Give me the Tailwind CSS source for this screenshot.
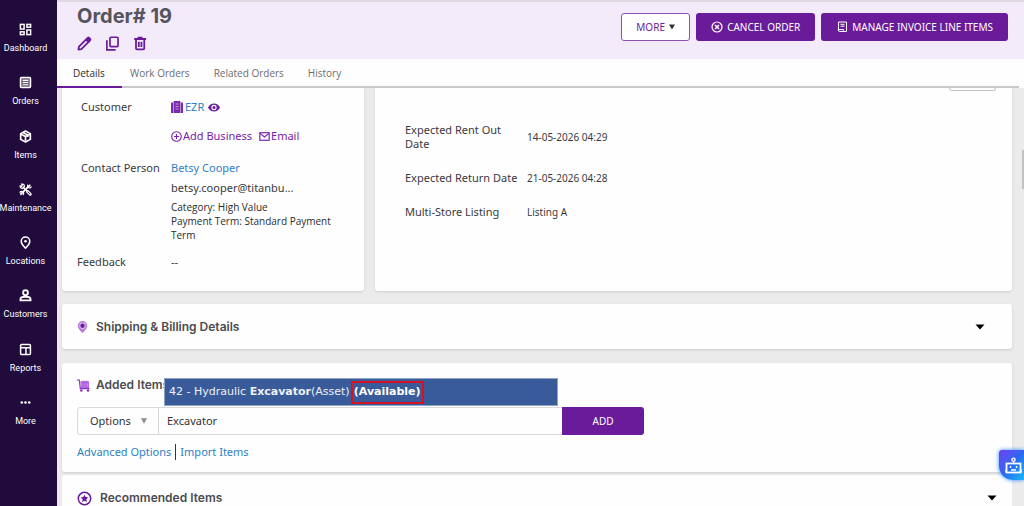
<!DOCTYPE html>
<html lang="en">
<head>
<meta charset="utf-8">
<meta name="viewport" content="width=device-width, initial-scale=1">
<title>Order# 19</title>
<script src="https://cdn.jsdelivr.net/npm/@tailwindcss/browser@4"></script>
</head>
<body class="flex h-screen overflow-hidden bg-[#ebebeb] font-['Noto_Sans','Open_Sans',sans-serif] text-[11px] leading-[14px] text-[#3a3a3d]">

<nav aria-label="Main" class="flex w-[57px] shrink-0 flex-col bg-[#210b3c] pt-[13px] pb-[67px] font-['Roboto',sans-serif] text-[9px] leading-[12px] text-white">
  <a href="#" class="flex flex-1 flex-col items-center gap-[6px] pt-[10px] pr-[6px]">
    <svg class="size-[13px] shrink-0" viewBox="0 0 14 14" fill="none" stroke="currentColor" stroke-width="1.6"><rect x="1.5" y="1.5" width="4" height="5"/><rect x="8.5" y="1.5" width="4" height="3"/><rect x="1.5" y="9.5" width="4" height="3"/><rect x="8.5" y="7.5" width="4" height="5"/></svg>Dashboard</a>
  <a href="#" class="flex flex-1 flex-col items-center gap-[6px] pt-[10px] pr-[6px]">
    <svg class="size-[13px] shrink-0" viewBox="0 0 14 14"><rect x="1.6" y="1.6" width="10.8" height="10.8" rx="1" fill="#6f6380" stroke="currentColor" stroke-width="1.6"/><path d="M4 4.7h6M4 7h6M4 9.3h6" stroke="currentColor" stroke-width="1.1"/></svg>Orders</a>
  <a href="#" class="flex flex-1 flex-col items-center gap-[6px] pt-[10px] pr-[6px]">
    <svg class="size-[13px] shrink-0" viewBox="0 0 14 14" fill="none" stroke="currentColor" stroke-width="1.8" stroke-linejoin="round"><path d="M7 1.2l5.2 2.7v6.2L7 12.8 1.8 10.1V3.9z"/><path d="M1.8 4.2L7 7l5.2-2.8M7 7v5.5M4.4 2.8l5 2.7v2"/></svg>Items</a>
  <a href="#" class="flex flex-1 flex-col items-center gap-[6px] pt-[10px] pr-[6px]">
    <svg class="size-[13px] shrink-0" viewBox="0 0 14 14" fill="none" stroke="currentColor" stroke-linecap="round"><path d="M2 12L11.5 2.5" stroke-width="2"/><path d="M4.5 4.5l6 6" stroke-width="1.5"/><path d="M9.3 9.3l2.8 2.8" stroke-width="3.2"/><path d="M9.6 9.6l2.3 2.3" stroke="#210b3c" stroke-width="1"/><path d="M2.8 1.2A2.3 2.3 0 1 1 1.2 3.1l1.5.6.8-.8zM9.3 2.3a2.4 2.4 0 0 0 2.7 3l1-1M1 10a2 2 0 0 1 3.5 2.5" stroke-width="1.3"/></svg>Maintenance</a>
  <a href="#" class="flex flex-1 flex-col items-center gap-[6px] pt-[10px] pr-[6px]">
    <svg class="size-[13px] shrink-0" viewBox="0 0 14 14" fill="none" stroke="currentColor" stroke-width="1.7"><path d="M7 13C4 10.2 2.4 8 2.4 5.7a4.6 4.6 0 0 1 9.2 0C11.6 8 10 10.2 7 13z"/><circle cx="7" cy="5.7" r="1.4" fill="currentColor" stroke="none"/></svg>Locations</a>
  <a href="#" class="flex flex-1 flex-col items-center gap-[6px] pt-[10px] pr-[6px]">
    <svg class="size-[13px] shrink-0" viewBox="0 0 14 14" fill="none" stroke="currentColor" stroke-width="2"><circle cx="7" cy="4" r="2.6"/><path d="M1.6 12.3v-1.5C1.6 9.3 4 8.3 7 8.3s5.4 1 5.4 2.5v1.5z"/></svg>Customers</a>
  <a href="#" class="flex flex-1 flex-col items-center gap-[6px] pt-[10px] pr-[6px]">
    <svg class="size-[13px] shrink-0" viewBox="0 0 14 14" fill="none" stroke="currentColor" stroke-width="1.6"><rect x="1.7" y="1.7" width="10.6" height="10.6" rx="1"/><path d="M2 5.2h10M7.5 5.2v7"/></svg>Reports</a>
  <a href="#" class="flex flex-1 flex-col items-center gap-[6px] pt-[10px] pr-[6px]">
    <svg class="size-[13px] shrink-0" viewBox="0 0 14 14" fill="currentColor"><circle cx="3" cy="7" r="1.4"/><circle cx="7" cy="7" r="1.4"/><circle cx="11" cy="7" r="1.4"/></svg>More</a>
</nav>

<div class="flex min-w-0 flex-1 flex-col">
  <header class="flex h-[59px] shrink-0 items-start justify-between border-t-2 border-[#dfd9e3] bg-[#f4ebfa] pr-4 pl-5">
    <div class="flex flex-col gap-2 pt-[2px]">
      <h1 class="font-['Inter',sans-serif] text-[20px] leading-6 font-bold text-[#55545c]">Order# 19</h1>
      <div class="flex gap-[13px] text-[#6a1b9a]">
        <button type="button" aria-label="Edit"><svg class="size-[15px]" viewBox="0 0 16 16" fill="none" stroke="currentColor" stroke-width="1.9" stroke-linejoin="round"><path d="M1.5 14.5l.6-3.2 7.7-7.7 2.6 2.6-7.7 7.7z"/><path d="M9.8 3.6l1.6-1.6q.8-.7 1.6 0l1 1q.7.8 0 1.6l-1.6 1.6z" fill="currentColor"/></svg></button>
        <button type="button" aria-label="Duplicate"><svg class="size-[15px]" viewBox="0 0 16 16" fill="none" stroke="currentColor" stroke-width="1.8"><rect x="5.3" y="1.3" width="8.6" height="10" rx="1"/><path d="M2 4.5v10.2h9.3"/></svg></button>
        <button type="button" aria-label="Delete"><svg class="size-[15px]" viewBox="0 0 16 16" fill="none" stroke="currentColor" stroke-width="1.9"><path d="M1.3 3.2h12.6M5 1.8h5.2M3.2 3.5v9.7q0 1 1 1h6.8q1 0 1-1V3.5M6.2 6v5.7M9 6v5.7"/></svg></button>
      </div>
    </div>
    <div class="flex gap-[6px] pt-[11px] text-[10px]">
      <button type="button" class="flex h-7 w-[69px] items-center justify-center gap-1 rounded-[3px] border border-[#8e4fb5] bg-white text-[#6a1b9a]">MORE <svg class="size-[6px]" viewBox="0 0 6 6" fill="#333"><path d="M0 .5h6L3 5.5z"/></svg></button>
      <button type="button" class="flex h-7 items-center justify-center gap-1 rounded-[3px] bg-[#6a1b9a] px-[15px] text-white"><svg class="size-3" viewBox="0 0 12 12" fill="none" stroke="currentColor" stroke-width="1.2"><circle cx="6" cy="6" r="5"/><path d="M4 4l4 4M8 4l-4 4" stroke-width="1.5"/></svg>CANCEL ORDER</button>
      <button type="button" class="flex h-7 items-center justify-center gap-1 rounded-[3px] bg-[#6a1b9a] px-[15px] text-white"><svg class="size-3" viewBox="0 0 12 12" fill="none" stroke="currentColor"><path d="M2.5 8V1h8v9.5H4Q2 10.5 2 8.5h5.5v1q0 1 1 1M4.5 3.3h4M4.5 5.2h4"/></svg>MANAGE INVOICE LINE ITEMS</button>
    </div>
  </header>

  <nav aria-label="Order sections" class="mr-[5px] flex h-[29px] shrink-0 border-b-2 border-[#c8c8ca] bg-[#fefefe] font-['Open_Sans',sans-serif] text-[10px] text-[#6d6d70] shadow-[5px_0_0_#fefefe]">
    <a href="#" class="-mb-[2px] flex w-[65px] items-center border-b-2 border-[#6a1b9a] pl-4 text-[#2c2c2e]">Details</a>
    <a href="#" class="flex items-center pl-2">Work Orders</a>
    <a href="#" class="flex items-center pl-6">Related Orders</a>
    <a href="#" class="flex items-center pl-6">History</a>
  </nav>

  <main class="relative flex min-h-0 flex-1 flex-col overflow-hidden pr-3 pl-[5px]">
    <div class="flex shrink-0 gap-[11px]">
      <section aria-label="Customer" class="w-[302px] shrink-0 rounded-b-[3px] bg-[#fefefe] pb-[22px] shadow-sm">
        <dl class="grid grid-cols-[90px_1fr] pt-3 pl-[19px] text-[11px]">
          <dt>Customer</dt>
          <dd class="flex flex-col gap-[15px]">
            <div class="flex items-center gap-[2px]"><svg class="size-3" viewBox="0 0 12 12"><path d="M2.6 0h6.8v12H2.6zM0 1.5h2V12H0zM10 1.5h2V12h-2z" fill="#7a2cac"/><path d="M2 2h.8v10H2zM9.200 2h.8v10h-.8z" fill="#b98ad6"/><path d="M4.500 3h3M4.500 5.500h3M4.500 8h3" stroke="#d7b6ea" stroke-width=".8"/></svg><a href="#" class="text-[#2f7fc4]">EZR</a><svg class="ml-[2px] h-[9px] w-3" viewBox="0 0 12 9"><path d="M0 4.500C2.500-.8 9.500-.8 12 4.500 9.500 9.800 2.500 9.800 0 4.500z" fill="#6a1b9a"/><circle cx="6" cy="4.500" r="2.100" fill="#6a1b9a" stroke="#fff" stroke-width="1.100"/></svg></div>
            <div class="flex gap-[7px] text-[#7a22a8]">
              <a href="#" class="flex items-center gap-px"><svg class="size-[11px]" viewBox="0 0 12 12" fill="none" stroke="currentColor" stroke-width="1.2"><circle cx="6" cy="6" r="5.2"/><path d="M6 3.2v5.6M3.2 6h5.6"/></svg>Add Business</a>
              <a href="#" class="flex items-center gap-px"><svg class="h-[9px] w-[11px]" viewBox="0 0 12 10" fill="none" stroke="currentColor" stroke-width="1.3"><rect x=".8" y=".8" width="10.4" height="8.4"/><path d="M1 1.5l5 4 5-4"/></svg>Email</a>
            </div>
          </dd>
          <dt class="pt-[18px]">Contact Person</dt>
          <dd class="flex flex-col pt-[18px]"><a href="#" class="text-[#2f7fc4]">Betsy Cooper</a><span class="mt-[6px]">betsy.cooper@titanbu...</span><span class="mt-[5px] w-[170px] font-['Open_Sans',sans-serif] text-[10px] text-[#2c2c2e]">Category: High Value<br>Payment Term: Standard Payment Term</span></dd>
          <dt class="-ml-1 pt-[13px]">Feedback</dt>
          <dd class="pt-[13px]">--</dd>
        </dl>
      </section>
      <section aria-label="Schedule" class="relative min-w-0 flex-1 rounded-b-[3px] bg-[#fefefe] shadow-sm">
        <div class="absolute top-0 right-4 h-[3px] w-[47px] rounded-b-[3px] border border-t-0 border-[#c4c4c6]"></div>
        <dl class="grid grid-cols-[122px_1fr] items-center gap-y-5 pt-[35px] pl-[30px] text-[10px]">
          <dt class="w-[105px] text-[11px]">Expected Rent Out Date</dt><dd>14-05-2026 04:29</dd>
          <dt class="text-[11px] whitespace-nowrap">Expected Return Date</dt><dd>21-05-2026 04:28</dd>
          <dt class="text-[11px]">Multi-Store Listing</dt><dd>Listing A</dd>
        </dl>
      </section>
    </div>

    <section class="mt-[13px] flex h-[45px] shrink-0 items-center rounded-[3px] bg-[#fefefe] pr-[27px] pl-[15px] shadow-sm">
      <svg class="h-3 w-[11px]" viewBox="0 0 11 12"><path d="M5.5 12C2.5 9 .8 7 .8 4.700a4.700 4.700 0 0 1 9.400 0C10.200 7 8.500 9 5.500 12z" fill="#b67be0"/><circle cx="5.500" cy="4.700" r="3.100" fill="#e3c8f5"/><circle cx="5.500" cy="4.700" r="2.200" fill="#6a1b9a"/></svg>
      <h2 class="ml-2 flex-1 font-['Inter',sans-serif] text-[12px] font-semibold text-[#4b4b4f]">Shipping &amp; Billing Details</h2>
      <button type="button" aria-label="Expand shipping and billing details"><svg class="h-[6px] w-[10px]" viewBox="0 0 10 6"><path d="M.5.5h9L5 5.5z"/></svg></button>
    </section>

    <section class="relative mt-[14px] h-[109px] shrink-0 rounded-[3px] bg-[#fefefe] pt-[15px] pl-[15px] shadow-sm">
      <div class="flex items-center gap-[6px]">
        <svg class="size-[13px]" viewBox="0 0 13 13"><path d="M0 1h2.300l1 8.600H12.500" fill="none" stroke="#8a35bd" stroke-width="1.200"/><path d="M3.500 2.200l1-.5.9.5.9-.6.9.6.9-.6.9.6.9-.6 1.100.6h1V9H3.900z" fill="#b264e2"/><path d="M5 4.500v3M8 4.500v3M10.500 4.500v3" stroke="#cd9bef" stroke-width=".7"/><circle cx="4.300" cy="11.500" r="1.300" fill="#8a35bd"/><circle cx="11" cy="11.500" r="1.300" fill="#8a35bd"/></svg>
        <h2 class="font-['Inter',sans-serif] text-[12px] font-semibold text-[#4b4b4f]">Added Items</h2>
      </div>
      <form class="mt-[15px] flex h-7 text-[11px]">
        <div class="relative w-[82px]">
          <select aria-label="Options" class="h-full w-full appearance-none rounded-l-[3px] border border-[#d9d9db] pl-3 text-[#333]"><option>Options</option></select>
          <svg class="pointer-events-none absolute top-[11px] right-3 size-[6px]" viewBox="0 0 6 6" fill="#8c8c8e"><path d="M0 .3h6L3 5.7z"/></svg>
        </div>
        <input aria-label="Search items" type="text" value="Excavator" class="w-[403px] border-y border-[#d9d9db] px-2 text-[#333]">
        <button type="button" class="w-[82px] rounded-r-[3px] bg-[#6a1b9a] text-[10px] text-white">ADD</button>
      </form>
      <div class="mt-[9px] flex h-4 items-center text-[11px] text-[#2f7fc4]"><a href="#">Advanced Options</a><span class="mx-1 h-4 w-px bg-[#333]"></span><a href="#">Import Items</a></div>
      <div role="listbox" aria-label="Matching items" class="absolute top-[15px] left-[102px] flex h-7 w-[394px] items-center border border-[#8fa3c8] bg-[#3a5b9a] pl-1 font-['DejaVu_Sans',sans-serif] text-[11px] text-[#edf1f8]">
        <div role="option" aria-selected="true" class="flex items-center whitespace-pre">42 - Hydraulic <b>Excavator</b>(Asset)<b class="ml-px flex h-[23px] w-[73px] items-center justify-center border-2 border-[#d51225] text-white">(Available)</b></div>
      </div>
    </section>

    <section class="mt-[3px] flex h-[46px] shrink-0 items-center rounded-[3px] bg-[#fefefe] pr-[15px] pl-[15px]">
      <svg class="size-[15px]" viewBox="0 0 14 14"><circle cx="7" cy="7" r="5.8" fill="none" stroke="#6a1b9a" stroke-width="1.4"/><path d="M7 3.4l1.1 2.3 2.5.3-1.8 1.8.4 2.5L7 9.1l-2.2 1.2.4-2.5L3.4 6l2.5-.3z" fill="#6a1b9a"/></svg>
      <h2 class="ml-2 flex-1 font-['Inter',sans-serif] text-[12px] font-semibold text-[#4b4b4f]">Recommended Items</h2>
      <button type="button" aria-label="Expand recommended items"><svg class="h-[6px] w-[10px]" viewBox="0 0 10 6"><path d="M.5.5h9L5 5.5z"/></svg></button>
    </section>
  </main>
</div>

<div class="fixed top-[150px] right-0 h-[39px] w-[2px] bg-[#c2c2c4]"></div>
<button type="button" aria-label="Open assistant" class="fixed right-0 bottom-[26px] flex h-[30px] w-[25px] items-center justify-center rounded-tl-[3px] rounded-bl-[14px] bg-linear-to-br from-[#6a3cf5] via-[#2867ef] to-[#1fb6f5] pl-[3px] shadow-[0_0_4px_#2b8cff]">
  <svg class="h-[17px] w-[17px]" viewBox="0 0 17 16" fill="none" stroke="#fff"><circle cx="8.5" cy="2.2" r="1.6" stroke-width="1.4"/><path d="M8.5 3.8V6" stroke-width="1.2"/><rect x="1.5" y="6" width="14" height="9" stroke-width="1.8"/><path d="M0 12v3M17 12v3M5.5 8.5v2M11.5 8.5v2M6 12.5h5" stroke-width="1.3"/></svg>
</button>
</body>
</html>
